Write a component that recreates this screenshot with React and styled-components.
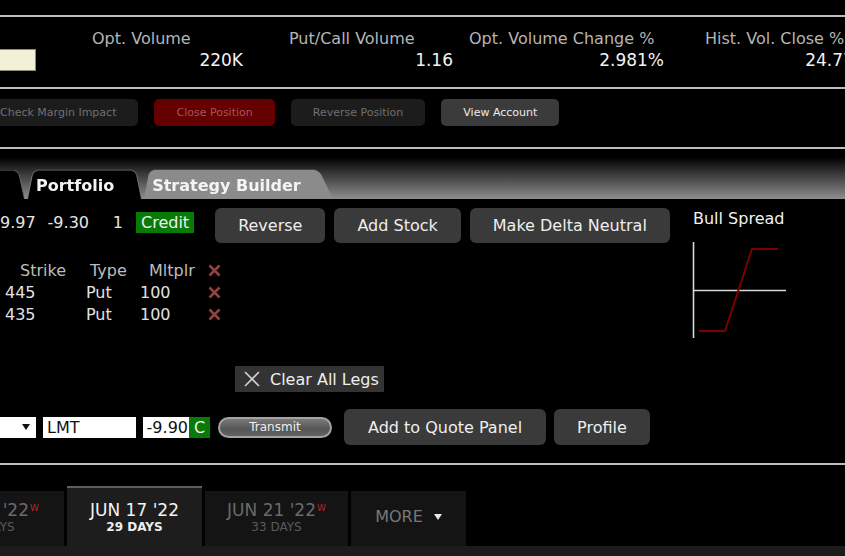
import React from 'react';
import styled, { createGlobalStyle } from 'styled-components';

const GlobalStyle = createGlobalStyle`
  html, body {
    margin: 0;
    padding: 0;
    background: #000;
  }
  body {
    font-family: "DejaVu Sans", Verdana, sans-serif;
    color: #eee;
    overflow: hidden;
  }
`;

const Page = styled.div`
  width: 845px;
  height: 556px;
  overflow: hidden;
  background: #000;
  display: flex;
  flex-direction: column;
`;

const TopGap = styled.div`
  height: 15px;
  flex: none;
`;

const Rule = styled.div`
  height: 2px;
  flex: none;
  background: #bdbdbd;
`;

/* ---------- stats ---------- */

const StatsBar = styled.div`
  height: 70px;
  flex: none;
  display: flex;
  align-items: flex-start;
`;

const NoteField = styled.div`
  flex: none;
  width: 35px;
  height: 20px;
  margin-top: 32px;
  background: #f2f0d6;
  border: 1px solid #8c8b7c;
  border-left: none;
`;

const Stat = styled.div`
  flex: none;
  width: ${p => p.$w}px;
  margin-left: ${p => p.$gap}px;
  padding-top: 13px;
  display: flex;
  flex-direction: column;
  white-space: nowrap;
`;

const StatLabel = styled.div`
  font-size: 16px;
  line-height: 18px;
  color: #b5b5b5;
`;

const StatValue = styled.div`
  font-size: 17px;
  line-height: 20px;
  margin-top: 2px;
  text-align: right;
  color: #f2f2f2;
`;

/* ---------- position actions ---------- */

const ActionBar = styled.div`
  height: 58px;
  flex: none;
  display: flex;
  align-items: flex-start;
  gap: 16px;
  padding-top: 10px;
  box-sizing: border-box;
`;

const tones = {
  muted: { bg: '#1c1c1c', fg: '#707070' },
  danger: { bg: '#640000', fg: '#a65656' },
  normal: { bg: '#3b3b3b', fg: '#ececec' },
};

const SmallButton = styled.button`
  flex: none;
  height: 27px;
  padding: 0 22px;
  margin-left: ${p => p.$shift || 0}px;
  border: none;
  border-radius: 5px;
  font-family: "DejaVu Sans", Verdana, sans-serif;
  font-size: 11px;
  white-space: nowrap;
  background: ${p => tones[p.$tone].bg};
  color: ${p => tones[p.$tone].fg};
`;

/* ---------- tabs ---------- */

const TabBand = styled.div`
  height: 50px;
  flex: none;
  display: flex;
  align-items: flex-end;
  gap: 2px;
  background: linear-gradient(to bottom, #000 16%, #8e8e8e 100%);
`;

const Tab = styled.div`
  position: relative;
  isolation: isolate;
  flex: none;
  height: 29px;
  width: ${p => (p.$w ? `${p.$w}px` : 'auto')};
  margin-left: ${p => p.$shift || 0}px;
  padding: 2px ${p => p.$tail || 27}px 0 ${p => p.$lead || 9}px;
  box-sizing: border-box;
  display: flex;
  align-items: center;
  font-size: 16px;
  font-weight: bold;
  color: #f4f4f4;
  white-space: nowrap;

  &::before {
    content: '';
    position: absolute;
    inset: -4px 0 0 0;
    z-index: -1;
    background: ${p => p.$fill};
    border: 1px solid ${p => p.$edge};
    border-bottom: none;
    border-radius: 7px 7px 0 0;
    transform: perspective(40px) rotateX(8deg);
    transform-origin: ${p => p.$origin || '50%'} 100%;
  }
`;

/* ---------- strategy builder ---------- */

const Builder = styled.div`
  height: 264px;
  flex: none;
  display: flex;
`;

const BuilderMain = styled.div`
  flex: none;
  width: 693px;
  display: flex;
  flex-direction: column;
`;

const SummaryRow = styled.div`
  height: 35px;
  margin-top: 9px;
  display: flex;
  align-items: center;
`;

const Figure = styled.div`
  flex: none;
  width: ${p => p.$w}px;
  margin-bottom: 6px;
  text-align: right;
  font-size: 16px;
  color: #e6e6e6;
`;

const CreditTag = styled.div`
  flex: none;
  margin-left: 13px;
  margin-bottom: 6px;
  height: 21px;
  line-height: 21px;
  padding: 0 5px;
  background: #077a07;
  color: #f0f0f0;
  font-size: 16px;
`;

const ButtonGroup = styled.div`
  display: flex;
  gap: ${p => p.$gap}px;
  margin-left: ${p => p.$offset}px;
`;

const ActionButton = styled.button`
  flex: none;
  height: ${p => p.$h || 35}px;
  padding: 0 ${p => p.$pad || 23}px;
  border: none;
  border-radius: 6px;
  background: #3a3a3a;
  color: #eeeeee;
  font-family: "DejaVu Sans", Verdana, sans-serif;
  font-size: 16px;
  white-space: nowrap;
`;

const LegTable = styled.div`
  margin-top: 16px;
  padding-left: 5px;
  display: grid;
  grid-template-columns: 81px 54px 68px 30px;
  grid-auto-rows: 22px;
  align-items: center;
  font-size: 16px;
`;

const HeadCell = styled.div`
  padding-left: ${p => p.$indent || 0}px;
  color: #bdbdbd;
`;

const Cell = styled.div`
  color: #e2e2e2;
`;

const IconCell = styled.div`
  display: flex;
  align-items: center;
`;

const ClearButton = styled.button`
  align-self: flex-start;
  margin-top: 41px;
  margin-left: 235px;
  height: 26px;
  padding: 0 5px 0 9px;
  display: flex;
  align-items: center;
  gap: 10px;
  border: none;
  background: #333;
  color: #eee;
  font-family: "DejaVu Sans", Verdana, sans-serif;
  font-size: 16px;
`;

const OrderRow = styled.div`
  height: 36px;
  margin-top: 17px;
  display: flex;
  align-items: center;
`;

const SelectBox = styled.div`
  flex: none;
  width: 36px;
  height: 21px;
  background: #fff;
  display: flex;
  align-items: center;
  justify-content: flex-end;
  padding-right: 6px;
  box-sizing: border-box;
`;

const Caret = styled.span`
  width: 0;
  height: 0;
  border-left: 4.5px solid transparent;
  border-right: 4.5px solid transparent;
  border-top: 6px solid ${p => p.$color || '#111'};
`;

const TextBox = styled.div`
  flex: none;
  margin-left: ${p => p.$gap}px;
  width: ${p => p.$w}px;
  height: 21px;
  line-height: 21px;
  padding: 0 ${p => (p.$right ? 1 : 4)}px;
  box-sizing: border-box;
  background: #fff;
  color: #111;
  font-size: 16px;
  text-align: ${p => (p.$right ? 'right' : 'left')};
`;

const SideTag = styled.div`
  flex: none;
  width: 21px;
  height: 21px;
  line-height: 21px;
  text-align: center;
  background: #077a07;
  color: #f0f0f0;
  font-size: 16px;
`;

const TransmitPill = styled.button`
  flex: none;
  margin-left: 8px;
  width: 114px;
  height: 21px;
  border-radius: 11px;
  border: 2px solid #a3a3a3;
  background: linear-gradient(to bottom, #7a7a7a, #555 60%, #636363);
  color: #eee;
  font-family: "DejaVu Sans", Verdana, sans-serif;
  font-size: 12px;
  padding: 0;
`;

const ChartPanel = styled.div`
  flex: none;
  padding-top: 11px;
  display: flex;
  flex-direction: column;
`;

const ChartTitle = styled.div`
  font-size: 16px;
  line-height: 18px;
  color: #f0f0f0;
`;

const ChartBox = styled.svg`
  margin-top: 14px;
  margin-left: -1px;
  display: block;
`;

/* ---------- expiries ---------- */

const ExpiryBar = styled.div`
  height: 81px;
  flex: none;
  display: flex;
  align-items: flex-end;
  gap: 3px;
`;

const ExpiryTab = styled.div`
  flex: none;
  width: ${p => p.$w}px;
  margin-left: ${p => p.$shift || 0}px;
  height: ${p => (p.$active ? 60 : 55)}px;
  box-sizing: border-box;
  padding-top: ${p => (p.$active ? 12 : 9)}px;
  background: ${p => (p.$active ? '#1d1d1d' : '#141414')};
  border-top: ${p => (p.$active ? '2px solid #5e5e5e' : 'none')};
  display: flex;
  flex-direction: column;
  align-items: center;
  white-space: nowrap;
`;

const ExpiryDate = styled.div`
  font-size: 17px;
  line-height: 20px;
  color: ${p => (p.$active ? '#f2f2f2' : '#6a6a6a')};
`;

const Weekly = styled.sup`
  font-size: 9px;
  color: #b42a2a;
  margin-left: 1px;
  vertical-align: top;
  position: relative;
  top: -2px;
`;

const ExpiryDays = styled.div`
  font-size: 12px;
  line-height: 15px;
  font-weight: ${p => (p.$active ? 'bold' : 'normal')};
  color: ${p => (p.$active ? '#eeeeee' : '#5a5a5a')};
`;

const MoreTab = styled.div`
  flex: none;
  width: 115px;
  height: 55px;
  padding-bottom: 4px;
  box-sizing: border-box;
  background: #141414;
  display: flex;
  align-items: center;
  justify-content: center;
  gap: 11px;
  font-size: 16px;
  color: #787878;
`;

const BottomStrip = styled.div`
  height: 10px;
  flex: none;
  background: #1c1c1c;
`;

/* ---------- icons ---------- */

const RemoveIcon = () => (
  <svg width="13" height="13" viewBox="0 0 13 13">
    <path d="M1.5 1.5 L11.5 11.5 M11.5 1.5 L1.5 11.5" stroke="#98403f" strokeWidth="2.6" />
  </svg>
);

const ThinX = () => (
  <svg width="16" height="16" viewBox="0 0 16 16">
    <path d="M1 1 L15 15 M15 1 L1 15" stroke="#d0d0d0" strokeWidth="1.6" />
  </svg>
);

const PayoffChart = () => (
  <ChartBox width="96" height="97" viewBox="0 0 96 97">
    <line x1="1.5" y1="0" x2="1.5" y2="96" stroke="#d8d8d8" strokeWidth="1.6" />
    <line x1="1" y1="48.5" x2="94" y2="48.5" stroke="#d8d8d8" strokeWidth="1.6" />
    <polyline points="7,89 33,89 60,7 86,7" fill="none" stroke="#7a0000" strokeWidth="2" />
  </ChartBox>
);

const stats = [
  { label: 'Opt. Volume', value: '220K', w: 151, gap: 56 },
  { label: 'Put/Call Volume', value: '1.16', w: 164, gap: 46 },
  { label: 'Opt. Volume Change %', value: '2.981%', w: 195, gap: 16 },
  { label: 'Hist. Vol. Close %', value: '24.77%', w: 165, gap: 41 },
];

const legs = [
  { strike: '445', type: 'Put', mult: '100' },
  { strike: '435', type: 'Put', mult: '100' },
];

const expiries = [
  { date: "JUN 10 '22", days: '22 DAYS', weekly: true, w: 149, shift: -85 },
  { date: "JUN 17 '22", days: '29 DAYS', active: true, w: 135 },
  { date: "JUN 21 '22", days: '33 DAYS', weekly: true, w: 143 },
];

export default function App() {
  return (
    <>
      <GlobalStyle />
      <Page>
        <TopGap />
        <Rule />
        <StatsBar>
          <NoteField />
          {stats.map(s => (
            <Stat key={s.label} $w={s.w} $gap={s.gap}>
              <StatLabel>{s.label}</StatLabel>
              <StatValue>{s.value}</StatValue>
            </Stat>
          ))}
        </StatsBar>
        <Rule />
        <ActionBar>
          <SmallButton $tone="muted" $shift={-22}>Check Margin Impact</SmallButton>
          <SmallButton $tone="danger">Close Position</SmallButton>
          <SmallButton $tone="muted">Reverse Position</SmallButton>
          <SmallButton $tone="normal">View Account</SmallButton>
        </ActionBar>
        <Rule />
        <TabBand>
          <Tab $w={125} $shift={-100} $fill="#000" $edge="#6a6a6a" />
          <Tab $fill="#000" $edge="#777" $tail={28}>Portfolio</Tab>
          <Tab $fill="#8b8b8b" $edge="#8b8b8b" $origin="28%" $lead={8} $tail={32}>
            Strategy Builder
          </Tab>
        </TabBand>
        <Builder>
          <BuilderMain>
            <SummaryRow>
              <Figure $w={33}>9.97</Figure>
              <Figure $w={56}>-9.30</Figure>
              <Figure $w={34}>1</Figure>
              <CreditTag>Credit</CreditTag>
              <ButtonGroup $gap={9} $offset={21}>
                <ActionButton>Reverse</ActionButton>
                <ActionButton>Add Stock</ActionButton>
                <ActionButton>Make Delta Neutral</ActionButton>
              </ButtonGroup>
            </SummaryRow>
            <LegTable>
              <HeadCell $indent={15}>Strike</HeadCell>
              <HeadCell $indent={4}>Type</HeadCell>
              <HeadCell $indent={9}>Mltplr</HeadCell>
              <IconCell><RemoveIcon /></IconCell>
              {legs.map((l, i) => (
                <React.Fragment key={i}>
                  <Cell>{l.strike}</Cell>
                  <Cell>{l.type}</Cell>
                  <Cell>{l.mult}</Cell>
                  <IconCell><RemoveIcon /></IconCell>
                </React.Fragment>
              ))}
            </LegTable>
            <ClearButton>
              <ThinX />
              Clear All Legs
            </ClearButton>
            <OrderRow>
              <SelectBox><Caret /></SelectBox>
              <TextBox $gap={7} $w={93}>LMT</TextBox>
              <TextBox $gap={7} $w={46} $right>-9.90</TextBox>
              <SideTag>C</SideTag>
              <TransmitPill>Transmit</TransmitPill>
              <ButtonGroup $gap={8} $offset={12}>
                <ActionButton $h={36} $pad={24}>Add to Quote Panel</ActionButton>
                <ActionButton $h={36} $pad={23}>Profile</ActionButton>
              </ButtonGroup>
            </OrderRow>
          </BuilderMain>
          <ChartPanel>
            <ChartTitle>Bull Spread</ChartTitle>
            <PayoffChart />
          </ChartPanel>
        </Builder>
        <Rule />
        <ExpiryBar>
          {expiries.map(e => (
            <ExpiryTab key={e.date} $w={e.w} $shift={e.shift} $active={e.active}>
              <ExpiryDate $active={e.active}>
                {e.date}
                {e.weekly && <Weekly>W</Weekly>}
              </ExpiryDate>
              <ExpiryDays $active={e.active}>{e.days}</ExpiryDays>
            </ExpiryTab>
          ))}
          <MoreTab>
            MORE
            <Caret $color="#e8e8e8" />
          </MoreTab>
        </ExpiryBar>
        <BottomStrip />
      </Page>
    </>
  );
}
